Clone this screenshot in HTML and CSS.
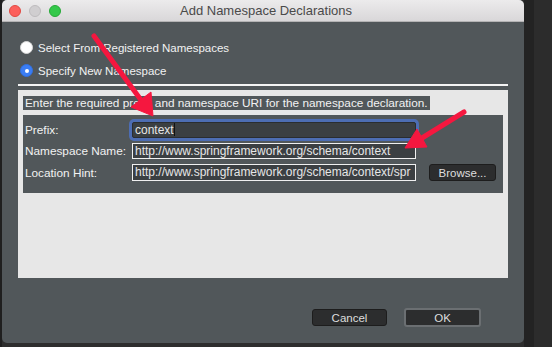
FILE: index.html
```html
<!DOCTYPE html>
<html lang="en">
<head>
    <meta charset="UTF-8">
    <title>Add Namespace Declarations</title>
    <link rel="stylesheet" href="styles.css">
</head>
<body>
    <div class="window">
        <div class="titlebar">
            <div class="lights">
                <span class="light red"></span>
                <span class="light grey"></span>
                <span class="light green"></span>
            </div>
            <div class="title">Add Namespace Declarations</div>
        </div>
        <div class="body">
            <div class="radios">
                <div class="radio-row"><span class="radio"></span>Select From Registered Namespaces</div>
                <div class="radio-row"><span class="radio on"></span>Specify New Namespace</div>
            </div>
            <div class="rule"></div>
            <div class="panel">
                <div class="hint">Enter the required prefix and namespace URI for the namespace declaration.</div>
                <div class="group">
                    <div class="label">Prefix:</div>
                    <div class="field focus">context<span class="caret"></span></div>
                    <div></div>
                    <div class="label">Namespace Name:</div>
                    <div class="field">http://www.springframework.org/schema/context</div>
                    <div></div>
                    <div class="label">Location Hint:</div>
                    <div class="field">http://www.springframework.org/schema/context/spr</div>
                    <div class="btn browse">Browse...</div>
                </div>
            </div>
            <div class="buttons">
                <div class="btn cancel">Cancel</div>
                <div class="btn ok">OK</div>
            </div>
        </div>
        <!-- annotation arrows drawn over the dialog -->
        <svg class="arrows" width="522" height="343" viewBox="0 0 522 343">
            <g fill="#f5173f" stroke="#f5173f">
                <line x1="92" y1="36" x2="139" y2="100" stroke-width="5" stroke-linecap="round"/>
                <polygon points="151,116 149,92 129,107" stroke-width="1"/>
                <line x1="462" y1="112" x2="420" y2="138" stroke-width="5" stroke-linecap="round"/>
                <polygon points="403,148 425,147 415,129" stroke-width="1"/>
            </g>
        </svg>
    </div>
</body>
</html>
```

FILE: styles.css
```css
body {
    margin: 0px;
    height: 347px;
    overflow: hidden;
    background: linear-gradient(90deg, #1f1f1f 0 2px, #2d2d2d 2px 524px, #232323 524px 534px, #2c2c2c 534px);
    font-family: 'Liberation Sans', Arial, sans-serif;
}

.window {
    position: relative;
    margin-left: 2px;
    width: 522px;
    height: 343px;
    background-color: #51575a;
    border-radius: 5px;
    overflow: hidden;
}

.titlebar {
    height: 21px;
    background: linear-gradient(#ecebec, #d9d7d9);
    border-bottom: 1px solid #b4b3b4;
    display: flex;
    align-items: center;
    position: relative;
}

.lights {
    display: flex;
    gap: 8px;
    padding-left: 7px;
}

.light {
    width: 12px;
    height: 12px;
    border-radius: 50%;
    box-sizing: border-box;
}

.red {
    background-color: #fc605c;
    border: 1px solid #e14942;
}

.grey {
    background-color: #d0ced0;
    border: 1px solid #bdbbbd;
}

.green {
    background-color: #34c84a;
    border: 1px solid #26a937;
}

.title {
    position: absolute;
    left: 0;
    right: 0;
    text-align: center;
    font-size: 13px;
    color: #4a4a4a;
    padding-left: 6px;
}

.body {
    padding: 14px 16px 0px 16px;
}

.radio-row {
    height: 23px;
    display: flex;
    align-items: center;
    color: #f2f2f2;
    font-size: 11.5px;
    padding-left: 2px;
}

.radio {
    width: 13px;
    height: 13px;
    border-radius: 50%;
    background-color: #ffffff;
    margin-right: 5px;
    box-sizing: border-box;
    border: 1px solid #d8d8d8;
    display: flex;
    align-items: center;
    justify-content: center;
}

.radio.on {
    background-color: #3b7df3;
    border-color: #3070e0;
}

.radio.on::after {
    content: "";
    width: 4px;
    height: 4px;
    border-radius: 50%;
    background-color: #ffffff;
}

.rule {
    height: 2px;
    background-color: #f4f4f4;
    margin-top: 2px;
}

.panel {
    margin-top: 4px;
    height: 188px;
    box-sizing: border-box;
    background-color: #e7e7e7;
    padding: 6px 5px;
}

.hint {
    width: fit-content;
    background-color: #51575a;
    color: #f2f2f2;
    font-size: 11.8px;
    line-height: 14px;
    padding: 0px 2px;
    white-space: nowrap;
}

.group {
    margin-top: 5px;
    background-color: #51575a;
    padding: 7px 7px 12px 2px;
    display: grid;
    grid-template-columns: 94px 284px 67px;
    grid-template-rows: 16px 16px 17px;
    column-gap: 13px;
    row-gap: 5px;
}

.label {
    color: #f2f2f2;
    font-size: 11.8px;
    display: flex;
    align-items: center;
    white-space: nowrap;
}

.field {
    background-color: #3b3f42;
    border: 1px solid #f0f0f0;
    color: #e6e6e6;
    font-size: 12px;
    line-height: 14px;
    padding: 0px 2px;
    white-space: nowrap;
    overflow: hidden;
    box-sizing: border-box;
}

.field.focus {
    border-color: #2a2d30;
    box-shadow: 0 0 0 3px #4d6db3;
    border-radius: 2px;
}

.caret {
    display: inline-block;
    width: 1px;
    height: 13px;
    background-color: #111111;
    vertical-align: top;
}

.btn {
    background-color: #2c2d2e;
    border: 1px solid #1d1d1d;
    border-radius: 3px;
    color: #dedede;
    font-size: 11.5px;
    display: flex;
    align-items: center;
    justify-content: center;
    box-sizing: border-box;
}

.buttons {
    display: flex;
    justify-content: flex-end;
    align-items: center;
    margin-top: 30px;
    padding-right: 27px;
    gap: 17px;
}

.cancel {
    width: 75px;
    height: 17px;
}

.ok {
    width: 77px;
    height: 19px;
    border: 2px solid #6b6f72;
}

.arrows {
    position: absolute;
    left: 0;
    top: 0;
    pointer-events: none;
}
```
